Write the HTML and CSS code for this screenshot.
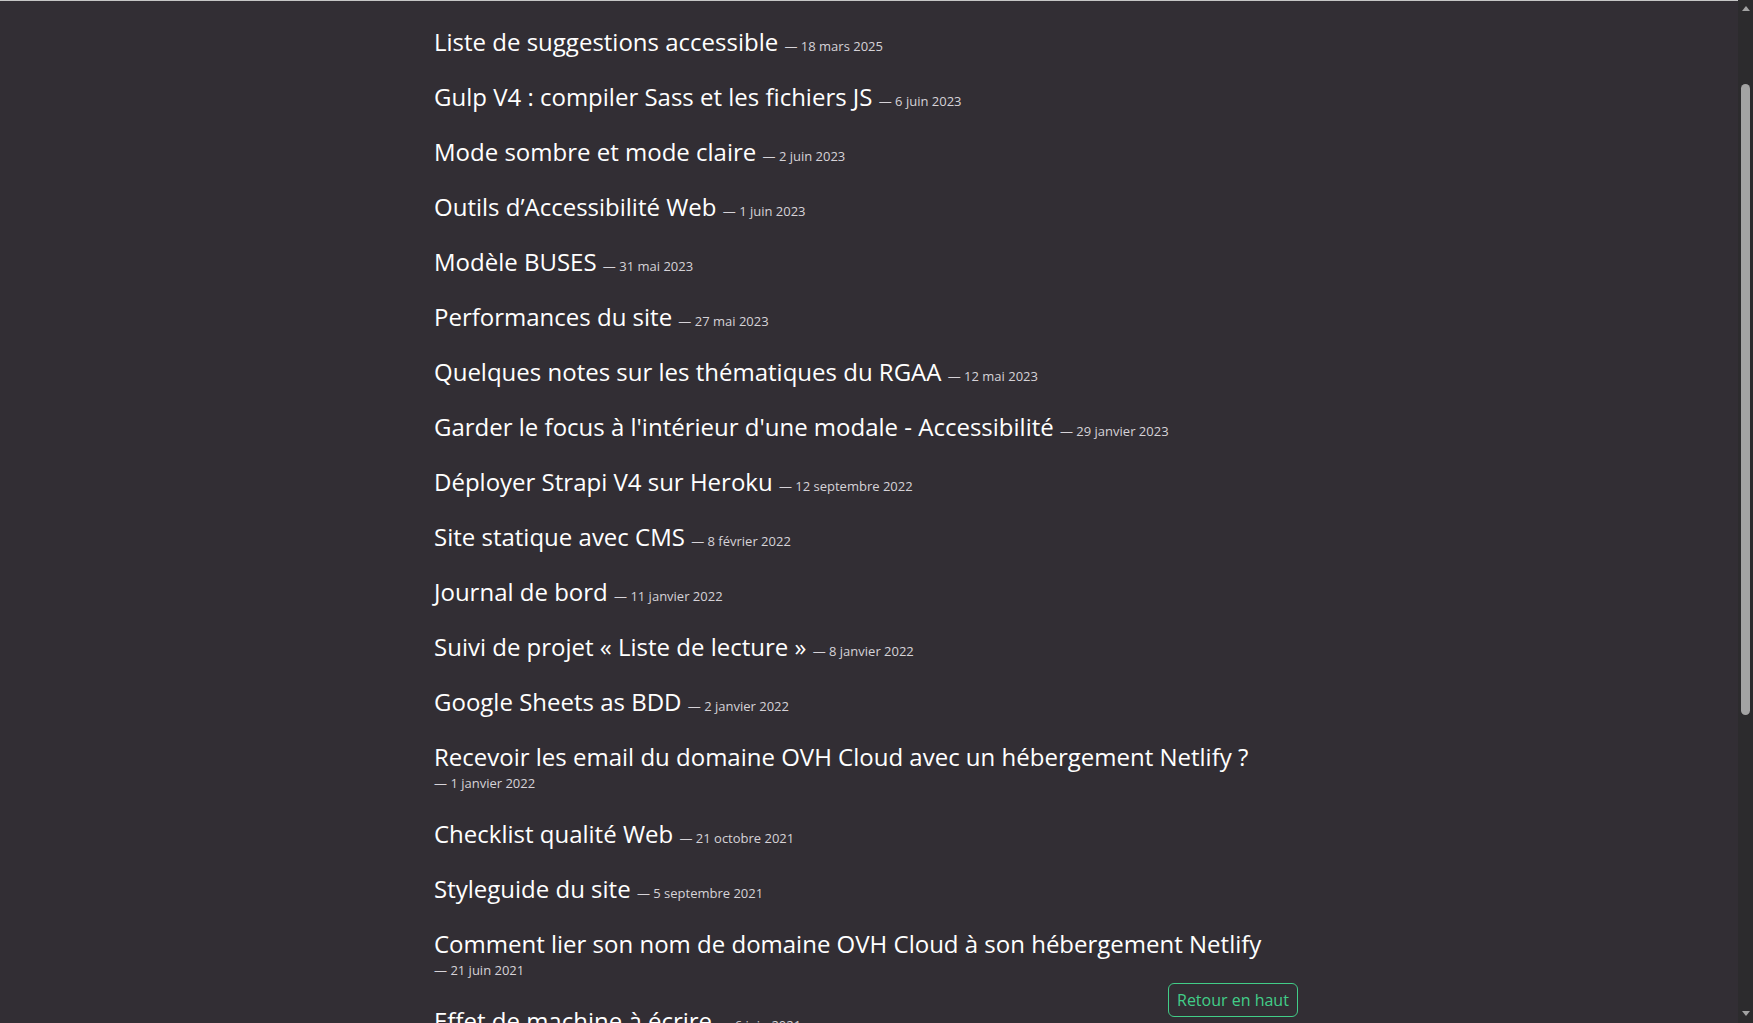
FILE: index.html
```html
<!DOCTYPE html>
<html lang="fr">
<head>
<meta charset="utf-8">
<title>Articles</title>
<link rel="stylesheet" href="styles.css">
</head>
<body>
<div class="page">
  <main class="main">
    <ul class="posts">
      <li class="post"><a class="post-title" href="#">Liste de suggestions accessible </a><span class="post-date">— 18 mars 2025</span></li>
      <li class="post"><a class="post-title" href="#">Gulp V4 : compiler Sass et les fichiers JS </a><span class="post-date">— 6 juin 2023</span></li>
      <li class="post"><a class="post-title" href="#">Mode sombre et mode claire </a><span class="post-date">— 2 juin 2023</span></li>
      <li class="post"><a class="post-title" href="#">Outils d’Accessibilité Web </a><span class="post-date">— 1 juin 2023</span></li>
      <li class="post"><a class="post-title" href="#">Modèle BUSES </a><span class="post-date">— 31 mai 2023</span></li>
      <li class="post"><a class="post-title" href="#">Performances du site </a><span class="post-date">— 27 mai 2023</span></li>
      <li class="post"><a class="post-title" href="#">Quelques notes sur les thématiques du RGAA </a><span class="post-date">— 12 mai 2023</span></li>
      <li class="post"><a class="post-title" href="#">Garder le focus à l'intérieur d'une modale - Accessibilité </a><span class="post-date">— 29 janvier 2023</span></li>
      <li class="post"><a class="post-title" href="#">Déployer Strapi V4 sur Heroku </a><span class="post-date">— 12 septembre 2022</span></li>
      <li class="post"><a class="post-title" href="#">Site statique avec CMS </a><span class="post-date">— 8 février 2022</span></li>
      <li class="post"><a class="post-title" href="#">Journal de bord </a><span class="post-date">— 11 janvier 2022</span></li>
      <li class="post"><a class="post-title" href="#">Suivi de projet « Liste de lecture » </a><span class="post-date">— 8 janvier 2022</span></li>
      <li class="post"><a class="post-title" href="#">Google Sheets as BDD </a><span class="post-date">— 2 janvier 2022</span></li>
      <li class="post"><a class="post-title" href="#">Recevoir les email du domaine OVH Cloud avec un hébergement Netlify ? </a><span class="post-date">— 1 janvier 2022</span></li>
      <li class="post"><a class="post-title" href="#">Checklist qualité Web </a><span class="post-date">— 21 octobre 2021</span></li>
      <li class="post"><a class="post-title" href="#">Styleguide du site </a><span class="post-date">— 5 septembre 2021</span></li>
      <li class="post"><a class="post-title" href="#">Comment lier son nom de domaine OVH Cloud à son hébergement Netlify </a><span class="post-date">— 21 juin 2021</span></li>
      <li class="post"><a class="post-title" href="#">Effet de machine à écrire </a><span class="post-date">— 6 juin 2021</span></li>
    </ul>
    <a class="back-top" href="#">Retour en haut</a>
  </main>
  <div class="scrollbar" aria-hidden="true">
    <span class="sb-arrow sb-up"></span>
    <span class="sb-thumb"></span>
    <span class="sb-arrow sb-down"></span>
  </div>
</div>
</body>
</html>
```
FILE: styles.css
```css
html, body {
  margin: 0;
  padding: 0;
  height: 100%;
  overflow: hidden;
}
body {
  background: #322e34;
  font-family: "Open Sans", "Noto Sans", sans-serif;
  color: #ffffff;
}
.page {
  display: flex;
  height: 100vh;
}
.main {
  flex: 1;
  overflow: hidden;
  border-top: 1px solid #c6c6c6;
  position: relative;
}
.posts {
  list-style: none;
  margin: 0 auto;
  padding: 24px 0 0;
  width: 870px;
}
.post {
  margin: 0 0 22px;
  font-size: 12px;
  line-height: 22px;
}
.post-title {
  color: #ffffff;
  text-decoration: none;
  font-size: 24px;
  line-height: 33px;
}
.post-date {
  font-size: 13px;
  line-height: 20px;
  color: #d6d3d8;
  white-space: nowrap;
}
.back-top {
  position: fixed;
  left: 1168px;
  bottom: 6px;
  box-sizing: border-box;
  height: 34px;
  padding: 5px 8px 0 8px;
  border: 1px solid #42cd88;
  border-radius: 6px;
  color: #42cd88;
  font-size: 16px;
  line-height: 22px;
  text-decoration: none;
  background: #322e34;
}
.scrollbar {
  width: 15px;
  flex: 0 0 15px;
  background: #2c2b2d;
  display: flex;
  flex-direction: column;
  align-items: center;
  position: relative;
}
.sb-arrow {
  width: 0;
  height: 0;
  border-left: 4px solid transparent;
  border-right: 4px solid transparent;
}
.sb-up {
  margin-top: 6px;
  border-bottom: 5px solid #a3a3a3;
}
.sb-thumb {
  margin-top: 73px;
  width: 9px;
  height: 631px;
  border-radius: 5px;
  background: #a3a3a3;
}
.sb-down {
  margin-top: auto;
  margin-bottom: 7px;
  border-top: 5px solid #a3a3a3;
}
```
